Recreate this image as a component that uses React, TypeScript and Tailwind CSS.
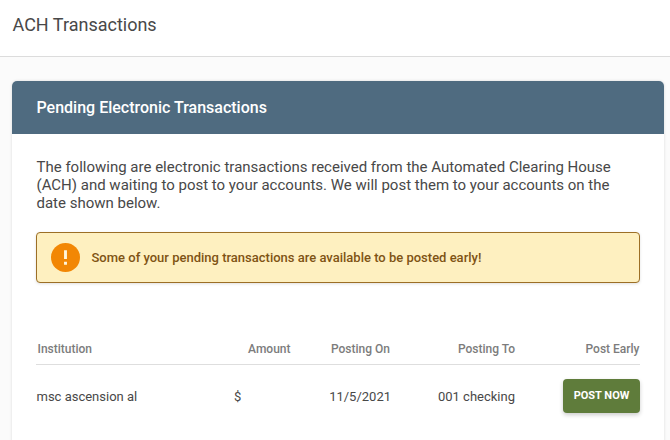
import React from "react";

const transactions = [
  {
    institution: "msc ascension al",
    amount: "$",
    postingOn: "11/5/2021",
    postingTo: "001 checking",
  },
];

const Alert: React.FC<{ message: string }> = ({ message }) => {
  return (
    <div className="mt-5 flex h-[51px] items-center gap-[11px] rounded-[4px] border border-[#9c6f26] bg-[#fef0c0] pl-3.5 shadow-[0_1px_3px_rgba(0,0,0,0.12)]">
      <svg className="mb-px h-[29px] w-[29px]" viewBox="2 2 20 20">
        <circle cx="12" cy="12" r="10" fill="#f28705" />
        <path d="M11 7h2v6h-2zM11 15h2v2h-2z" fill="#fff6dc" />
      </svg>
      <span className="pl-[0.5px] text-[13px] font-medium text-[#7f5314]">{message}</span>
    </div>
  );
};

const App: React.FC = () => {
  return (
    <div className="h-[440px] w-[670px] overflow-hidden bg-[#fbfbfb] font-['Roboto',sans-serif] text-[#484848]">
      <header className="h-[57px] border-b border-[#dcdcdc] bg-white pl-[12.5px] pt-[11px]">
        <h1 className="text-[18px] leading-7">ACH Transactions</h1>
      </header>
      <main className="pl-3 pr-1.5 pt-6">
        <section className="h-[400px] overflow-hidden rounded-[5px] bg-white shadow-[0_0_3px_rgba(0,0,0,0.14)]">
          <h2 className="flex h-[53px] items-center bg-[#4f6b80] pl-[24.5px] text-[16px] font-medium text-white">
            Pending Electronic Transactions
          </h2>
          <div className="px-6 pt-6">
            <p className="pl-[0.5px] text-[15px] leading-[18px]">
              The following are electronic transactions received from the Automated Clearing House
              <br />
              (ACH) and waiting to post to your accounts. We will post them to your accounts on the
              <br />
              date shown below.
            </p>
            <Alert message="Some of your pending transactions are available to be posted early!" />
            <table className="mt-[50px] w-full table-fixed text-[13px]">
              <thead>
                <tr className="h-[31px] border-b border-[#dedede] text-[12px] text-[#7c7c7c]">
                  <th className="w-[150px] pl-[1.5px] pt-0.5 text-left font-medium">Institution</th>
                  <th className="w-[105px] pr-[0.5px] pt-0.5 text-right font-medium">Amount</th>
                  <th className="w-[100px] pr-px pt-0.5 text-right font-medium">Posting On</th>
                  <th className="w-[124px] pt-0.5 text-right font-medium">Posting To</th>
                  <th className="pr-[0.5px] pt-0.5 text-right font-medium">Post Early</th>
                </tr>
              </thead>
              <tbody>
                {transactions.map((item) => (
                  <tr key={item.institution} className="h-[63px]">
                    <td className="pl-[0.5px] pt-0.5">{item.institution}</td>
                    <td className="pl-12 pt-0.5">{item.amount}</td>
                    <td className="pt-0.5 text-right">{item.postingOn}</td>
                    <td className="pt-0.5 text-right">{item.postingTo}</td>
                    <td className="text-right">
                      <button className="h-[34px] w-[77px] rounded bg-[#5f7c3b] text-[11px] font-bold text-white shadow-[0_2px_4px_rgba(0,0,0,0.2)]">
                        POST NOW
                      </button>
                    </td>
                  </tr>
                ))}
              </tbody>
            </table>
          </div>
        </section>
      </main>
    </div>
  );
};

export default App;
